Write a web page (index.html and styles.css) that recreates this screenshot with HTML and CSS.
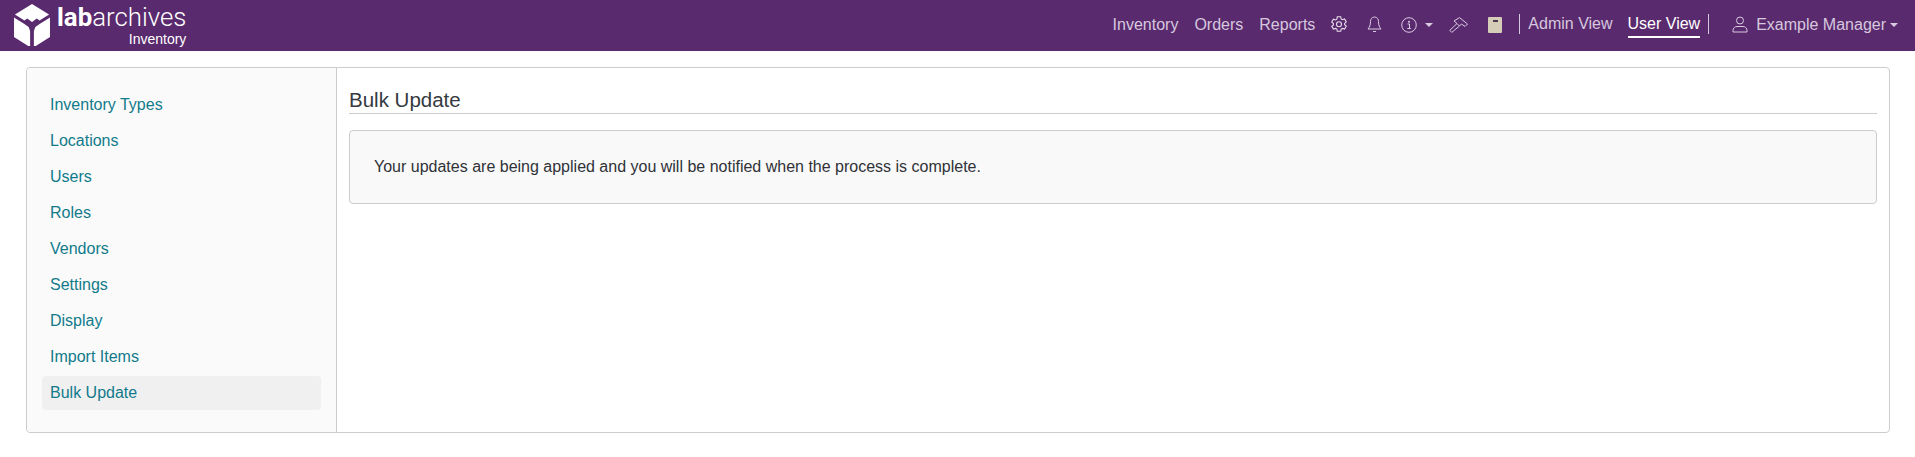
FILE: index.html
```html
<!DOCTYPE html>
<html lang="en">
<head>
    <meta charset="UTF-8">
    <title>Bulk Update</title>
    <link rel="stylesheet" href="styles.css">
</head>
<body>
    <nav class="navbar">
        <a class="brand" href="#">
            <svg class="brand-logo" width="36" height="42" viewBox="0 0 38 42" preserveAspectRatio="none">
                <path fill="#fff" d="M19 0 L37 10.500 L27 16.500 L24 14.500 L19 18 L14 14.500 L11 16.500 L1 10.500 Z"/>
                <path fill="#fff" d="M0 13.500 L11 20 L15.500 23 L17 27 L17 42 L15 42 L0 33 Z"/>
                <path fill="#fff" d="M38 13.500 L27 20 L22.500 23 L21 27 L21 42 L23 42 L38 33 Z"/>
            </svg>
            <span class="brand-text">
                <span class="brand-name"><b>lab</b>archives</span>
                <span class="brand-sub">Inventory</span>
            </span>
        </a>
        <div class="nav-right">
            <a class="nav-link" href="#">Inventory</a>
            <a class="nav-link" href="#">Orders</a>
            <a class="nav-link" href="#">Reports</a>
            <a class="nav-icon icon-gear" href="#">
                <svg width="16" height="17" viewBox="0 0 16 17" fill="none" stroke="#e6dcea" stroke-width="1.100">
                    <path d="M6.300 .8h3.400l.5 2.200 1.200.7 2.200-.7 1.700 2.900-1.700 1.500v1.300l1.700 1.500-1.700 2.900-2.200-.7-1.200.7-.5 2.200H6.300l-.5-2.200-1.200-.7-2.200.7L.7 10.400l1.700-1.500V7.600L.7 6.100l1.700-2.900 2.200.7 1.200-.7z"/>
                    <circle cx="8" cy="8.300" r="2.500"/>
                </svg>
            </a>
            <a class="nav-icon icon-bell" href="#">
                <svg width="15" height="17" viewBox="0 0 15 17" fill="none" stroke="#d9cbe0" stroke-width="1">
                    <path d="M7.500 1C4.800 1 3.500 3.200 3.500 5.500c0 4-1 5.500-2.500 7.500h13c-1.500-2-2.500-3.500-2.500-7.500C11.500 3.200 10.200 1 7.500 1z"/>
                    <path d="M6 15.500h3"/>
                </svg>
            </a>
            <a class="nav-icon icon-info caret" href="#">
                <svg width="16" height="16" viewBox="0 0 16 16" fill="none" stroke="#d9cbe0" stroke-width="1">
                    <circle cx="8" cy="8" r="7.300"/>
                    <path d="M6.500 7h2v4.500M6.300 11.500h3.600"/>
                    <path d="M7.500 4.300h1v1h-1z"/>
                </svg>
            </a>
            <a class="nav-icon icon-hammer" href="#">
                <svg width="19" height="16" viewBox="0 0 19 16" fill="none" stroke="#d9cbe0" stroke-width="1">
                    <path d="M5 4 L10.500 .6 L18.500 7 L16 9.500 L12.500 7 L10.500 9 L8 6.500 Z"/>
                    <path d="M8 6.500 L.8 13.300 L2.700 15.400 L10.500 9"/>
                </svg>
            </a>
            <a class="nav-icon icon-book" href="#">
                <svg width="14" height="16" viewBox="0 0 14 16">
                    <rect width="14" height="16" rx="1" fill="#d6cdb8"/>
                    <rect x="5" y="3" width="5" height="2" fill="#4a3a50"/>
                </svg>
            </a>
            <div class="view-switch">
                <a class="view-link" href="#">Admin View</a>
                <a class="view-link active" href="#">User View</a>
            </div>
            <a class="nav-user caret" href="#">
                <svg width="16" height="17" viewBox="0 0 16 17" fill="none" stroke="#d9cbe0" stroke-width="1">
                    <circle cx="8" cy="4.500" r="3.500"/>
                    <path d="M1 16v-1.500C1 12 3 10.500 5 10.500h6c2 0 4 1.500 4 4V16z"/>
                </svg>
                <span>Example Manager</span>
            </a>
        </div>
    </nav>

    <div class="container">
        <aside class="sidebar">
            <a class="side-link" href="#">Inventory Types</a>
            <a class="side-link" href="#">Locations</a>
            <a class="side-link" href="#">Users</a>
            <a class="side-link" href="#">Roles</a>
            <a class="side-link" href="#">Vendors</a>
            <a class="side-link" href="#">Settings</a>
            <a class="side-link" href="#">Display</a>
            <a class="side-link" href="#">Import Items</a>
            <a class="side-link active" href="#">Bulk Update</a>
        </aside>
        <main class="content">
            <h1 class="page-title">Bulk Update</h1>
            <div class="well">Your updates are being applied and you will be notified when the process is complete.</div>
        </main>
    </div>
</body>
</html>
```

FILE: styles.css
```css
body {
    margin: 0;
    font-family: "Liberation Sans", Arial, sans-serif;
    font-size: 14px;
    color: #333;
    background-color: #fff;
}

a {
    text-decoration: none;
}

.navbar {
    display: flex;
    justify-content: space-between;
    height: 51px;
    background-color: #5a2a6e;
    padding: 0 17px 0 14px;
}

.brand {
    display: flex;
    color: white;
    padding-top: 4px;
}

.brand-text {
    display: flex;
    flex-direction: column;
    align-items: flex-end;
    margin-left: 7px;
}

.brand-name {
    font-family: Roboto, "Liberation Sans", sans-serif;
    font-size: 25.8px;
    line-height: 27px;
    font-weight: 300;
}

.brand-name b {
    font-weight: bold;
}

.brand-sub {
    font-size: 14px;
    line-height: 16px;
}

.nav-right {
    display: flex;
    align-items: center;
    padding-bottom: 2px;
    font-size: 16px;
}

.nav-link {
    color: #d6c8de;
    margin-right: 16px;
}

.nav-icon {
    display: flex;
    align-items: center;
}

.icon-bell { margin-left: 20px; }
.icon-info { margin-left: 19px; }
.icon-hammer { margin-left: 16px; }
.icon-book { margin-left: 20px; }

.caret::after {
    content: "";
    display: inline-block;
    margin-left: 4px;
    border-top: 4px solid #d9cbe0;
    border-left: 4px solid transparent;
    border-right: 4px solid transparent;
}

.icon-info::after {
    margin-left: 8px;
}

.view-switch {
    display: flex;
    gap: 15px;
    height: 20px;
    margin-left: 17px;
    margin-top: -1px;
    padding: 0 8px 0 8px;
    border-left: 1px solid #d6c8de;
    border-right: 1px solid #d6c8de;
}

.view-link {
    color: #d6c8de;
    line-height: 19px;
}

.view-link.active {
    color: white;
    height: 22px;
    border-bottom: 2px solid white;
}

.nav-user {
    display: flex;
    align-items: center;
    color: #d6c8de;
    margin-left: 23px;
}

.nav-user span {
    margin-left: 8px;
}

.container {
    display: flex;
    height: 366px;
    margin: 16px 25px 0 26px;
    border: 1px solid #ccc;
    border-radius: 4px;
    box-sizing: border-box;
}

.sidebar {
    width: 310px;
    padding: 20px 15px 0 15px;
    box-sizing: border-box;
    background-color: #fafafa;
    border-right: 1px solid #ccc;
    border-radius: 4px 0 0 4px;
}

.side-link {
    display: block;
    height: 34px;
    line-height: 34px;
    margin-bottom: 2px;
    padding-left: 8px;
    font-size: 16px;
    color: #117a8b;
    border-radius: 4px;
}

.side-link.active {
    background-color: #f0f0f0;
}

.content {
    flex: 1;
    padding: 21px 12px 0 12px;
}

.page-title {
    margin: 0 0 16px;
    padding-bottom: 2px;
    font-size: 20.5px;
    line-height: 22px;
    font-weight: normal;
    color: #343a40;
    border-bottom: 1px solid #ccc;
}

.well {
    height: 74px;
    box-sizing: border-box;
    padding: 27px 24px 0 24px;
    font-size: 16px;
    line-height: 18px;
    color: #2f3237;
    background-color: #f9f9f9;
    border: 1px solid #ccc;
    border-radius: 4px;
}
```
